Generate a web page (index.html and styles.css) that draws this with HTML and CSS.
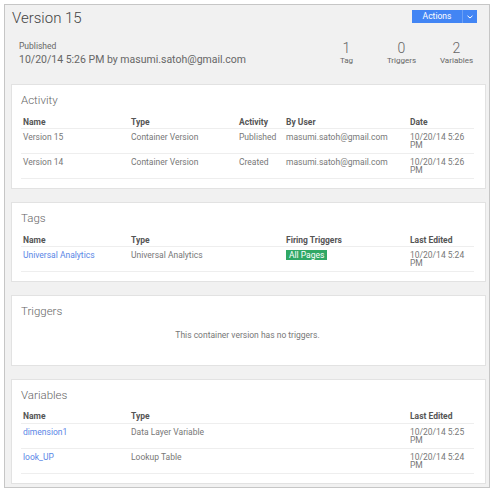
FILE: index.html
```html
<!DOCTYPE html>
<html>
<head>
<meta charset="utf-8">
<link rel="stylesheet" href="styles.css">
</head>
<body>
<div class="page">
  <div class="top">
    <div class="title">Version 15</div>
    <div class="btn">
      <span class="btn-label">Actions</span>
      <span class="btn-arrow"><svg width="6" height="4" viewBox="0 0 6 4"><polyline points="0.5,0.8 3,3 5.5,0.8" fill="none" stroke="#fff" stroke-width="1"/></svg></span>
    </div>
  </div>
  <div class="meta-row">
    <div class="meta">
      <div class="meta-label">Published</div>
      <div class="meta-date">10/20/14 5:26 PM by masumi.satoh@gmail.com</div>
    </div>
    <div class="stats">
      <div class="stat"><div class="num">1</div><div class="lbl">Tag</div></div>
      <div class="stat"><div class="num">0</div><div class="lbl">Triggers</div></div>
      <div class="stat"><div class="num">2</div><div class="lbl">Variables</div></div>
    </div>
  </div>

  <div class="card">
    <div class="card-title">Activity</div>
    <div class="tbl tbl-activity">
      <div class="row head"><div>Name</div><div>Type</div><div>Activity</div><div>By User</div><div>Date</div></div>
      <div class="row"><div>Version 15</div><div>Container Version</div><div>Published</div><div>masumi.satoh@gmail.com</div><div>10/20/14 5:26 PM</div></div>
      <div class="row"><div>Version 14</div><div>Container Version</div><div>Created</div><div>masumi.satoh@gmail.com</div><div>10/20/14 5:26 PM</div></div>
    </div>
  </div>

  <div class="card">
    <div class="card-title">Tags</div>
    <div class="tbl tbl-tags">
      <div class="row head"><div>Name</div><div>Type</div><div>Firing Triggers</div><div>Last Edited</div></div>
      <div class="row"><div><a class="link">Universal Analytics</a></div><div>Universal Analytics</div><div><span class="badge">All Pages</span></div><div>10/20/14 5:24 PM</div></div>
    </div>
  </div>

  <div class="card">
    <div class="card-title">Triggers</div>
    <div class="empty">This container version has no triggers.</div>
  </div>

  <div class="card">
    <div class="card-title">Variables</div>
    <div class="tbl tbl-vars">
      <div class="row head"><div>Name</div><div>Type</div><div>Last Edited</div></div>
      <div class="row"><div><a class="link">dimension1</a></div><div>Data Layer Variable</div><div>10/20/14 5:25 PM</div></div>
      <div class="row"><div><a class="link">look_UP</a></div><div>Lookup Table</div><div>10/20/14 5:24 PM</div></div>
    </div>
  </div>
</div>
</body>
</html>
```

FILE: styles.css
```css
html, body {
  margin: 0;
  padding: 0;
  background: #ffffff;
}
body {
  font-family: Roboto, "Liberation Sans", Arial, sans-serif;
  color: #777;
}
.page {
  margin: 4px 0 0 4px;
  border: 1px solid #c6c6c6;
  background: #f1f1f1;
  padding: 0 3px 3px 6px;
  box-sizing: content-box;
  width: 475px;
}
.top {
  display: flex;
  justify-content: space-between;
  align-items: flex-start;
  padding-top: 4px;
}
.title {
  font-size: 15px;
  font-weight: 300;
  line-height: 18px;
  color: #444;
  padding-left: 1px;
}
.btn {
  display: flex;
  margin-top: 1px;
  margin-right: 9px;
  height: 13px;
  background: #4285f4;
  color: #fff;
}
.btn-label {
  width: 50px;
  text-align: center;
  font-size: 8.5px;
  line-height: 13px;
}
.btn-arrow {
  width: 14px;
  border-left: 1px solid #6ba0f6;
  display: flex;
  align-items: center;
  justify-content: center;
}
.meta-row {
  display: flex;
  justify-content: space-between;
  align-items: flex-start;
  margin-top: 12.5px;
}
.meta {
  padding-left: 8px;
  padding-top: 1.5px;
  color: #666;
}
.meta-label {
  font-size: 8.5px;
  line-height: 10px;
}
.meta-date {
  margin-top: 3px;
  font-size: 10.5px;
  line-height: 12px;
}
.stats {
  display: grid;
  grid-template-columns: 55px 55px 55px;
  margin-right: 2px;
  text-align: center;
  color: #666;
}
.num {
  font-size: 14px;
  font-weight: 300;
  line-height: 16px;
}
.lbl {
  font-size: 8px;
  line-height: 10px;
}
.card {
  margin-top: 13px;
  background: #fff;
  border: 1px solid #e2e2e2;
  padding: 8px 11px 9px 9px;
}
.meta-row + .card {
  margin-top: 18px;
}
.card-title {
  font-size: 11.5px;
  font-weight: 300;
  line-height: 14px;
  color: #666;
  margin-bottom: 9.5px;
}
.tbl-activity { --cols: 108px 108px 47px 124px 65px; }
.tbl-tags { --cols: 108px 155px 124px 65px; }
.tbl-vars { --cols: 108px 279px 65px; }
.row {
  display: grid;
  grid-template-columns: var(--cols);
  font-size: 8.5px;
  line-height: 8px;
  border-bottom: 1px solid #eeeeee;
  padding-top: 4px;
  box-sizing: content-box;
  height: 20px;
}
.row > div {
  padding-left: 2px;
}
.row.head {
  font-weight: 700;
  color: #555;
  line-height: 10px;
  height: 10px;
  padding-top: 0;
  padding-bottom: 1.5px;
}
.link {
  color: #5a86e6;
}
.badge {
  display: inline-block;
  background: #30a865;
  color: #fff;
  padding: 0 3px;
  line-height: 10px;
  margin-top: -1px;
}
.empty {
  text-align: center;
  font-size: 8.5px;
  line-height: 10px;
  padding: 2px 0 16px;
}
```
